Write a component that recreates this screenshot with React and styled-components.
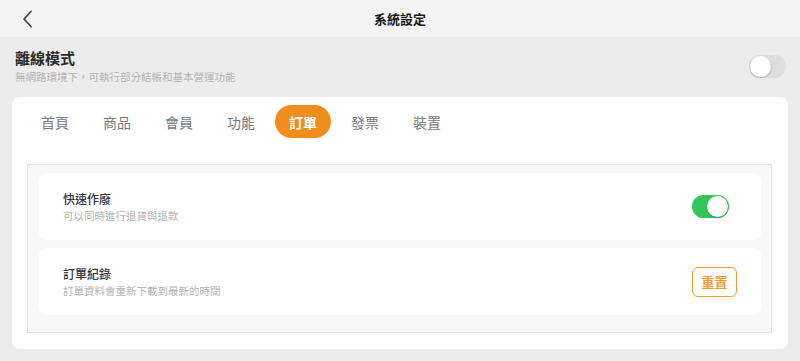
import React, { useState } from "react";
import styled, { createGlobalStyle } from "styled-components";

const GlobalStyle = createGlobalStyle`
  html, body {
    margin: 0;
    padding: 0;
    background: #ececec;
    font-family: "Noto Sans CJK TC", "Noto Sans", sans-serif;
  }
`;

const Page = styled.div`
  width: 800px;
  height: 361px;
  display: flex;
  flex-direction: column;
  background: #ececec;
`;

const Header = styled.div`
  height: 37px;
  background: #f4f4f4;
  display: flex;
  align-items: center;
  justify-content: center;
  position: relative;
`;

const BackButton = styled.button`
  position: absolute;
  left: 18px;
  top: 9px;
  width: 18px;
  height: 20px;
  padding: 0;
  border: none;
  background: none;
  display: flex;
  align-items: center;
  justify-content: center;
`;

const Title = styled.div`
  font-size: 13px;
  font-weight: 700;
  color: #1a1a1a;
`;

const Offline = styled.div`
  height: 60px;
  box-sizing: border-box;
  padding: 11px 14px 0 15px;
  display: flex;
  justify-content: space-between;
  align-items: flex-start;
`;

const OfflineText = styled.div`
  display: flex;
  flex-direction: column;
`;

const OfflineTitle = styled.div`
  font-size: 15px;
  line-height: 20px;
  font-weight: 700;
  color: #2b2b2b;
`;

const Hint = styled.div`
  font-size: 10.5px;
  line-height: 14px;
  color: #b3b3b3;
  margin-top: ${(p) => p.$gap || 0}px;
`;

const Switch = styled.div`
  width: 37px;
  height: 23px;
  border-radius: 12px;
  box-sizing: border-box;
  background: ${(p) => (p.$on ? "#34c55a" : "#dddddd")};
  position: relative;
  margin-top: ${(p) => p.$top || 0}px;
  margin-right: ${(p) => p.$right || 0}px;
  flex-shrink: 0;

  &::after {
    content: "";
    position: absolute;
    top: 1px;
    left: ${(p) => (p.$on ? "15px" : "1px")};
    width: 21px;
    height: 21px;
    border-radius: 50%;
    background: #fff;
    box-shadow: 0 1px 2px rgba(0, 0, 0, 0.25);
  }
`;

const Card = styled.div`
  margin: 0 12px;
  height: 252px;
  box-sizing: border-box;
  background: #fff;
  border-radius: 8px;
  padding: 8px 16px 16px 15px;
  display: flex;
  flex-direction: column;
`;

const Tabs = styled.div`
  display: flex;
  gap: 6px;
  height: 33px;
`;

const Tab = styled.div`
  width: 56px;
  height: 33px;
  border-radius: 17px;
  display: flex;
  align-items: center;
  justify-content: center;
  font-size: 14px;
  font-weight: ${(p) => (p.$active ? 700 : 400)};
  color: ${(p) => (p.$active ? "#fff" : "#7a7a7a")};
  background: ${(p) => (p.$active ? "#ef8d1d" : "transparent")};
`;

const Panel = styled.div`
  margin-top: 26px;
  flex: 1;
  border: 1px solid #e4e4e4;
  background: #f8f8f8;
  padding: 8px 10px 17px 11px;
  display: flex;
  flex-direction: column;
  gap: 8px;
`;

const Row = styled.div`
  height: 67px;
  background: #fff;
  border-radius: 8px;
  padding: 0 24px;
  display: flex;
  align-items: center;
  justify-content: space-between;
`;

const RowText = styled.div`
  display: flex;
  flex-direction: column;
`;

const RowTitle = styled.div`
  font-size: 12px;
  line-height: 17px;
  font-weight: 500;
  color: #333;
`;

const OutlineButton = styled.button`
  width: 45px;
  height: 30px;
  box-sizing: border-box;
  border: 1.5px solid #f59a2c;
  border-radius: 6px;
  background: #fff;
  color: #f29a32;
  font-family: inherit;
  font-size: 13px;
  font-weight: 700;
  padding: 0;
`;

const tabs = ["首頁", "商品", "會員", "功能", "訂單", "發票", "裝置"];

export default function App() {
  const [active] = useState("訂單");
  return (
    <Page>
      <GlobalStyle />
      <Header>
        <BackButton>
          <svg width="12" height="18" viewBox="0 0 12 18">
            <path d="M10 1.5 L3 9 L10 16.5" fill="none" stroke="#444" strokeWidth="1.8" strokeLinecap="round" strokeLinejoin="round" />
          </svg>
        </BackButton>
        <Title>系統設定</Title>
      </Header>
      <Offline>
        <OfflineText>
          <OfflineTitle>離線模式</OfflineTitle>
          <Hint $gap={2}>無網路環境下，可執行部分結帳和基本營運功能</Hint>
        </OfflineText>
        <Switch $top={7} />
      </Offline>
      <Card>
        <Tabs>
          {tabs.map((t) => (
            <Tab key={t} $active={t === active}>
              {t}
            </Tab>
          ))}
        </Tabs>
        <Panel>
          <Row>
            <RowText>
              <RowTitle>快速作廢</RowTitle>
              <Hint $gap={2}>可以同時進行退貨與退款</Hint>
            </RowText>
            <Switch $on $right={8} />
          </Row>
          <Row>
            <RowText>
              <RowTitle>訂單紀錄</RowTitle>
              <Hint $gap={2}>訂單資料會重新下載到最新的時間</Hint>
            </RowText>
            <OutlineButton>重置</OutlineButton>
          </Row>
        </Panel>
      </Card>
    </Page>
  );
}
